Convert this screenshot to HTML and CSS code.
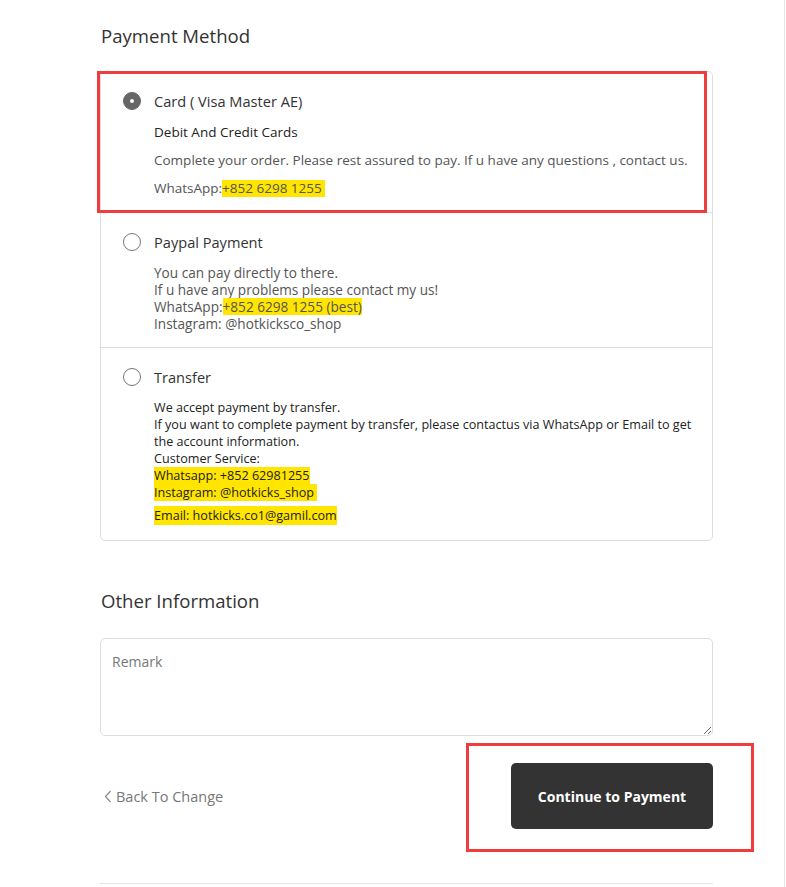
FILE: index.html
```html
<!DOCTYPE html>
<html lang="en">
<head>
    <meta charset="UTF-8">
    <title>Payment Method</title>
    <link rel="stylesheet" href="styles.css">
</head>
<body>
    <div class="page">
        <div class="checkout">
            <h2 class="section-title">Payment Method</h2>

            <div class="methods">
                <div class="method">
                    <div class="method-head">
                        <span class="radio checked"></span>
                        <span class="method-name">Card ( Visa Master AE)</span>
                    </div>
                    <div class="method-body card-body">
                        <p class="dark">Debit And Credit Cards</p>
                        <p>Complete your order. Please rest assured to pay. If u have any questions , contact us.</p>
                        <p>WhatsApp:<mark>+852 6298 1255&nbsp;</mark></p>
                    </div>
                </div>

                <div class="method">
                    <div class="method-head">
                        <span class="radio"></span>
                        <span class="method-name">Paypal Payment</span>
                    </div>
                    <div class="method-body">
                        You can pay directly to there.<br>
                        If u have any problems please contact my us!<br>
                        WhatsApp:<mark>+852 6298 1255 (best)</mark><br>
                        Instagram: @hotkicksco_shop
                    </div>
                </div>

                <div class="method">
                    <div class="method-head">
                        <span class="radio"></span>
                        <span class="method-name">Transfer</span>
                    </div>
                    <div class="method-body small dark">
                        We accept payment by transfer.<br>
                        If you want to complete payment by transfer, please contactus via WhatsApp or Email to get the account information.<br>
                        Customer Service:<br>
                        <mark>Whatsapp: +852 62981255</mark><br>
                        <mark>Instagram: @hotkicks_shop&nbsp;</mark><br>
                        <mark class="tall">Email: hotkicks.co1@gamil.com</mark>
                    </div>
                </div>
            </div>

            <h2 class="section-title other">Other Information</h2>
            <textarea class="remark" placeholder="Remark"></textarea>

            <div class="actions">
                <a class="back" href="#">
                    <svg width="8" height="13" viewBox="0 0 8 13"><path d="M6.5 1 L1.5 6.5 L6.5 12" fill="none" stroke="#888" stroke-width="1.2"/></svg>
                    Back To Change
                </a>
                <button class="continue">Continue to Payment</button>
            </div>

            <div class="foot-line"></div>
        </div>

        <div class="mark-box mark-card"></div>
        <div class="mark-box mark-btn"></div>
    </div>
</body>
</html>
```

FILE: styles.css
```css
body {
    margin: 0;
    background: #fff;
    font-family: "Open Sans", "Noto Sans", sans-serif;
    color: #333;
}
.page {
    position: relative;
    width: 785px;
    min-height: 887px;
    border-right: 1px solid #e5e5e5;
    box-sizing: border-box;
}
.checkout {
    width: 613px;
    margin-left: 100px;
    padding-top: 22px;
}
.section-title {
    margin: 0 0 21px 1px;
    font-size: 18.6px;
    font-weight: 400;
    line-height: 28px;
    color: #333;
}
.section-title.other {
    margin-top: 46px;
    margin-bottom: 23px;
}
.methods {
    border: 1px solid #ddd;
    border-radius: 5px;
}
.method {
    padding: 19px 0 15px 22px;
    border-top: 1px solid #ddd;
}
.method:first-child {
    border-top: none;
}
.method-head {
    display: flex;
    align-items: center;
    gap: 13px;
    height: 20px;
}
.radio {
    width: 18px;
    height: 18px;
    border: 1px solid #777;
    border-radius: 50%;
    box-sizing: border-box;
    position: relative;
}
.radio.checked {
    background: #666;
    border-color: #666;
}
.radio.checked::after {
    content: "";
    position: absolute;
    left: 6px;
    top: 6px;
    width: 4px;
    height: 4px;
    border-radius: 50%;
    background: #fff;
}
.method-name {
    font-size: 14.6px;
    color: #333;
}
.method-body {
    margin: 12px 0 0 31px;
    padding-right: 18px;
    font-size: 13.6px;
    line-height: 17px;
    color: #555;
}
.method-body.small {
    font-size: 12.6px;
}
.method-body.dark, .dark {
    color: #222;
}
.card-body {
    margin-top: 13px;
    font-size: 13.5px;
}
.card-body p {
    margin: 0 0 11px;
}
.card-body p:last-child {
    margin-bottom: 0;
}
mark {
    display: inline-block;
    line-height: 17px;
    background: #ffe500;
    color: inherit;
}
mark.tall {
    margin-top: 5px;
    padding: 1px 0;
}
.remark {
    display: block;
    width: 613px;
    height: 98px;
    box-sizing: border-box;
    border: 1px solid #ddd;
    border-radius: 5px;
    padding: 13px 11px;
    font-family: inherit;
    font-size: 14px;
    color: #333;
    resize: vertical;
}
.remark::placeholder {
    color: #777;
}
.actions {
    display: flex;
    justify-content: space-between;
    align-items: center;
    margin-top: 27px;
}
.back {
    display: flex;
    align-items: center;
    gap: 4px;
    margin-left: 4px;
    color: #777;
    font-size: 14.5px;
    text-decoration: none;
}
.continue {
    width: 202px;
    height: 66px;
    border: none;
    border-radius: 5px;
    background: #333;
    color: #fff;
    font-family: inherit;
    font-size: 14px;
    font-weight: 700;
}
.foot-line {
    margin-top: 54px;
    border-top: 1px solid #e5e5e5;
}
.mark-box {
    position: absolute;
    border: 3px solid #f03c3c;
    box-sizing: border-box;
}
.mark-card {
    left: 97px;
    top: 71px;
    width: 610px;
    height: 142px;
}
.mark-btn {
    left: 466px;
    top: 743px;
    width: 288px;
    height: 109px;
}
```
